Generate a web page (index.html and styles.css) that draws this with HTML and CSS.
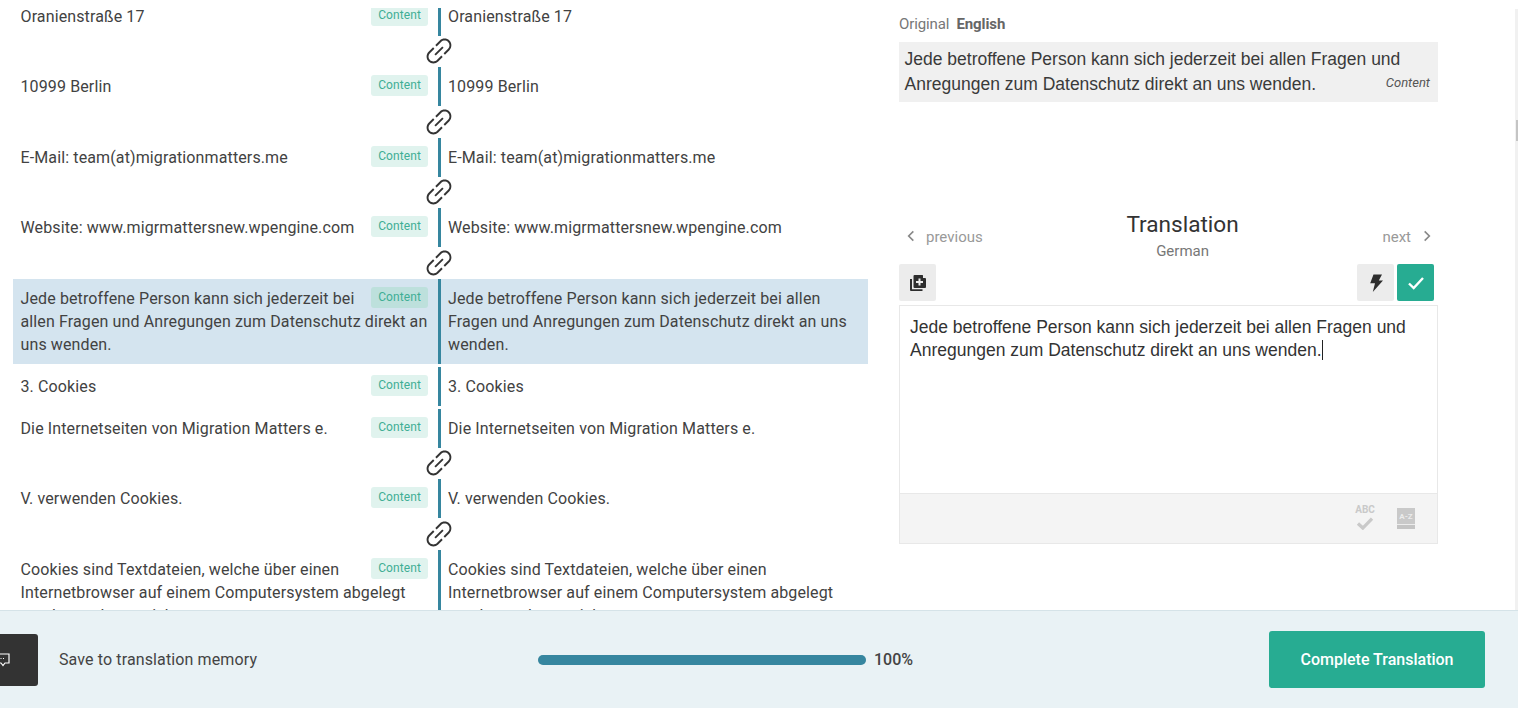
FILE: index.html
```html
<!DOCTYPE html>
<html lang="en">
<head>
<meta charset="utf-8">
<title>Translation editor</title>
<link rel="stylesheet" href="styles.css">
</head>
<body>
<svg class="defs" width="0" height="0" aria-hidden="true">
  <symbol id="link" viewBox="0 0 24 24">
    <path transform="rotate(-45 12 12)" fill="#333" d="M3.900 12c0-1.710 1.390-3.100 3.100-3.100h4V7.700H7c-2.370 0-4.300 1.930-4.300 4.300s1.930 4.300 4.300 4.300h4v-1.200H7c-1.710 0-3.100-1.390-3.100-3.100zM8.500 12.600h7v-1.200h-7zM17 7.700h-4v1.200h4c1.710 0 3.100 1.390 3.100 3.100s-1.390 3.100-3.100 3.100h-4v1.200h4c2.370 0 4.300-1.930 4.300-4.300s-1.930-4.300-4.300-4.300z"/>
  </symbol>
</svg>
<main class="workspace">
  <section class="segments">
    <div class="segments-inner">
      <div class="row"><div class="cell source"><span class="tag">Content</span>Oranienstraße 17</div><div class="cell target">Oranienstraße 17</div></div>
      <div class="link"><svg class="link-icon"><use href="#link"/></svg></div>
      <div class="row"><div class="cell source"><span class="tag">Content</span>10999 Berlin</div><div class="cell target">10999 Berlin</div></div>
      <div class="link"><svg class="link-icon"><use href="#link"/></svg></div>
      <div class="row"><div class="cell source"><span class="tag">Content</span>E-Mail: team(at)migrationmatters.me</div><div class="cell target">E-Mail: team(at)migrationmatters.me</div></div>
      <div class="link"><svg class="link-icon"><use href="#link"/></svg></div>
      <div class="row"><div class="cell source"><span class="tag">Content</span>Website: www.migrmattersnew.wpengine.com</div><div class="cell target">Website: www.migrmattersnew.wpengine.com</div></div>
      <div class="link"><svg class="link-icon"><use href="#link"/></svg></div>
      <div class="row selected"><div class="cell source"><span class="tag">Content</span>Jede betroffene Person kann sich jederzeit bei allen Fragen und Anregungen zum Datenschutz direkt an uns wenden.</div><div class="cell target">Jede betroffene Person kann sich jederzeit bei allen Fragen und Anregungen zum Datenschutz direkt an uns wenden.</div></div>
      <div class="spacer"></div>
      <div class="row"><div class="cell source"><span class="tag">Content</span>3. Cookies</div><div class="cell target">3. Cookies</div></div>
      <div class="spacer"></div>
      <div class="row"><div class="cell source"><span class="tag">Content</span>Die Internetseiten von Migration Matters e.</div><div class="cell target">Die Internetseiten von Migration Matters e.</div></div>
      <div class="link"><svg class="link-icon"><use href="#link"/></svg></div>
      <div class="row"><div class="cell source"><span class="tag">Content</span>V. verwenden Cookies.</div><div class="cell target">V. verwenden Cookies.</div></div>
      <div class="link"><svg class="link-icon"><use href="#link"/></svg></div>
      <div class="row"><div class="cell source"><span class="tag">Content</span>Cookies sind Textdateien, welche über einen Internetbrowser auf einem Computersystem abgelegt werden und gespeichert.</div><div class="cell target">Cookies sind Textdateien, welche über einen Internetbrowser auf einem Computersystem abgelegt werden und gespeichert.</div></div>
    </div>
  </section>
  <aside class="panel">
    <div class="original-head"><span class="original-label">Original</span><strong class="original-lang">English</strong></div>
    <div class="original-box">
      Jede betroffene Person kann sich jederzeit bei allen Fragen und Anregungen zum Datenschutz direkt an uns wenden.
      <em class="original-tag">Content</em>
    </div>
    <div class="translation-head">
      <span class="nav"><svg class="chev" viewBox="0 0 12 12"><path d="M8 2 4 6l4 4" fill="none" stroke="#888" stroke-width="1.4"/></svg>previous</span>
      <div class="title-block"><h1 class="title">Translation</h1><div class="lang">German</div></div>
      <span class="nav nav-next">next<svg class="chev" viewBox="0 0 12 12"><path d="m4 2 4 4-4 4" fill="none" stroke="#888" stroke-width="1.4"/></svg></span>
    </div>
    <div class="toolbar">
      <button class="tool"><svg class="tool-icon" viewBox="0 0 20 20"><path fill="#2e2e2e" d="M6.500 2h8l3.500 3.500v8.500a1 1 0 0 1-1 1H6.500a1 1 0 0 1-1-1V3a1 1 0 0 1 1-1Z"/><path fill="#2e2e2e" d="M2 6h2v10.200h10.500V18H3a1 1 0 0 1-1-1Z"/><path fill="#ececec" d="M10.500 5.500h2v2.500H15v2h-2.500v2.500h-2V10H8V8h2.500Z"/><path fill="#ececec" d="M15 2h.6L18 4.400V5h-3Z"/></svg></button>
      <div class="tool-right">
        <button class="tool narrow"><svg class="tool-icon" viewBox="0 0 20 20"><path fill="#2e2e2e" d="M7.500 1.500h8.500l-3.200 6h4.200L6.800 19l2.200-8.800H4.200Z"/></svg></button>
        <button class="tool narrow confirm"><svg class="tool-icon" viewBox="0 0 20 20"><path fill="none" stroke="#fff" stroke-width="2.400" d="m3 10.500 4.700 4.500 9.300-10"/></svg></button>
      </div>
    </div>
    <div class="editor">
      <div class="editor-text">Jede betroffene Person kann sich jederzeit bei allen Fragen und Anregungen zum Datenschutz direkt an uns wenden.<span class="caret"></span></div>
      <div class="editor-foot">
        <span class="spell"><span class="abc">ABC</span><svg class="spell-check" viewBox="0 0 16 12"><path d="m1.500 6 4.500 4.200L14.500 1.500" fill="none" stroke="#c9c9c9" stroke-width="3"/></svg></span>
        <span class="book">A-Z</span>
      </div>
    </div>
  </aside>
  <div class="rail"><div class="rail-thumb"></div></div>
</main>
<footer class="footer">
  <div class="footer-left">
    <button class="comment"><svg class="comment-icon" viewBox="0 0 14 14"><path d="M1 1h12v9H9l-2 2.500L5 10H1Z" fill="none" stroke="#fff" stroke-width="1.200"/><path d="M4.500 5.500h1M7 5.500h1" stroke="#fff" stroke-width="1.200"/></svg></button>
    <span class="memory">Save to translation memory</span>
  </div>
  <div class="progress"><div class="track"><div class="fill" style="width:100%"></div></div><span class="percent">100%</span></div>
  <button class="complete">Complete Translation</button>
</footer>
</body>
</html>
```
FILE: styles.css
```css
* { box-sizing: border-box; }
html, body { margin: 0; height: 100%; overflow: hidden; }
body { display: flex; flex-direction: column; height: 708px; font-family: Roboto, "Liberation Sans", sans-serif; color: #3c3c3c; background: #fff; }
.defs { position: absolute; }
.workspace { height: 610px; display: flex; flex: none; }
.segments { margin: 8px 0 0 13px; width: 855px; overflow: hidden; flex: none; }
.segments-inner { margin-top: -11.100px; }
.row { display: flex; font-size: 16px; line-height: 23px; letter-spacing: .12px; color: #424242; }
.row.selected { background: #d4e4ef; }
.cell { padding: 8px; }
.source { width: 425px; padding-left: 7.500px; padding-right: 10px; }
.target { flex: 1; border-left: 3px solid #36869f; padding-left: 7px; padding-right: 16px; }
.tag { float: right; margin: -.300px 0 0 8px; background: #e0f3ee; color: #3fae95; font-size: 12px; line-height: 21px; height: 21px; padding: 0 7px; border-radius: 3px; letter-spacing: .1px; }
.selected .tag { background: #bde0dc; }
.link { height: 31.500px; display: flex; align-items: center; padding-left: 407px; }
.link-icon { width: 38px; height: 38px; flex: none; margin-top: -1px; }
.spacer { height: 3px; }
.panel { width: 539px; margin-left: 31px; flex: none; }
.original-head { margin-top: 15px; font-size: 15px; line-height: 18px; color: #777; display: flex; gap: 7px; letter-spacing: -.1px; }
.original-lang { color: #666; font-weight: 700; }
.original-box { margin-top: 9px; height: 60px; background: #f0f0f0; padding: 5px 5.500px; font: 17.500px/25px "Liberation Sans", Arial, sans-serif; color: #3a3a3a; position: relative; }
.original-tag { position: absolute; right: 8px; bottom: 11px; font: italic 13px/16px Roboto, sans-serif; color: #555; }
.translation-head { margin-top: 108px; display: flex; justify-content: space-between; align-items: flex-start; height: 54px; padding: 0 4px 0 5px; }
.nav { display: flex; align-items: center; gap: 8px; font-size: 15px; color: #999; margin-top: 17px; line-height: 20px; }
.nav-next { gap: 9px; }
.chev { width: 14px; height: 14px; margin-top: -2px; }
.title-block { text-align: center; }
.title { margin: 0; font-size: 22.600px; font-weight: 400; line-height: 30px; color: #333; }
.lang { font-size: 15px; line-height: 18px; color: #777; margin-top: 2px; }
.toolbar { display: flex; justify-content: space-between; padding: 0 4px 0 0; }
.tool { width: 37px; height: 37px; border: 0; border-radius: 2px; background: #ececec; padding: 0; display: flex; align-items: center; justify-content: center; }
.tool-right { display: flex; gap: 3px; }
.tool.confirm { background: #27ac92; }
.tool-icon { width: 20px; height: 20px; }
.editor { margin-top: 4px; border: 1px solid #e8e8e8; height: 239px; display: flex; flex-direction: column; }
.editor-text { flex: 1; padding: 10px; font: 17.500px/23px "Liberation Sans", Arial, sans-serif; color: #333; }
.caret { display: inline-block; width: 1px; height: 20px; background: #222; vertical-align: -4px; }
.editor-foot { height: 50px; background: #f4f4f4; border-top: 1px solid #e8e8e8; display: flex; justify-content: flex-end; align-items: center; gap: 23px; padding-right: 22px; }
.spell { width: 18px; display: flex; flex-direction: column; align-items: center; margin-top: -2px; }
.abc { font-size: 10px; line-height: 10px; font-weight: 700; color: #c9c9c9; }
.spell-check { width: 18px; height: 13px; margin-top: 2px; }
.book { width: 18px; height: 21px; background: #c9c9c9; color: #ececec; font-size: 8px; font-weight: 700; text-align: center; line-height: 18px; box-shadow: inset 0 -4px 0 #c4c4c4, inset 0 -5px 0 #ececec; }
.rail { flex: 1; margin-top: 9px; background: #fff; border-right: 3px solid #f1f1f1; position: relative; }
.rail-thumb { position: absolute; right: -3px; top: 111px; width: 2px; height: 21px; background: #c4c4c4; }
.footer { flex: 1; background: #e9f2f5; border-top: 1px solid #d5e3e8; display: flex; align-items: center; justify-content: space-between; position: relative; padding-right: 33px; }
.footer-left { display: flex; align-items: center; gap: 21px; }
.comment { width: 38px; height: 52px; background: #333; border: 0; border-radius: 0 3px 3px 0; padding: 0; display: flex; align-items: center; justify-content: flex-start; overflow: hidden; }
.comment-icon { width: 14px; height: 14px; margin-left: -4px; }
.memory { font-size: 16px; color: #444; letter-spacing: .12px; }
.progress { position: absolute; left: 538px; top: 39px; display: flex; align-items: center; gap: 8px; }
.track { width: 328px; height: 10px; background: #d3e1e7; border-radius: 5px; }
.fill { height: 100%; background: #36869f; border-radius: 5px; }
.percent { font-size: 16px; font-weight: 500; line-height: 20px; color: #444; }
.complete { width: 216px; height: 57px; background: #27ac92; color: #fff; border: 0; border-radius: 3px; font: 500 16px Roboto, sans-serif; }
```
